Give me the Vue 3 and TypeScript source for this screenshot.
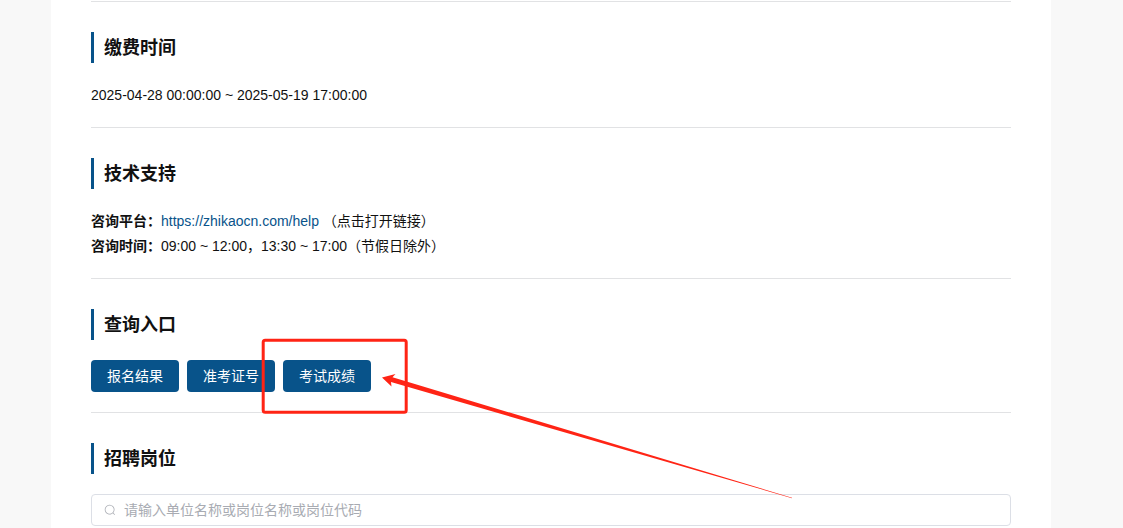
<script setup lang="ts">
import { ref } from 'vue'

const keyword = ref('')
const entries: string[] = ['报名结果', '准考证号']
</script>

<template>
  <div class="page">
    <main class="card">
      <section class="section">
        <h2 class="title">缴费时间</h2>
        <div class="lines">
          <p>2025-04-28 00:00:00 ~ 2025-05-19 17:00:00</p>
        </div>
      </section>

      <section class="section">
        <h2 class="title">技术支持</h2>
        <div class="lines">
          <p>
            <strong>咨询平台：</strong><a href="https://zhikaocn.com/help">https://zhikaocn.com/help</a>
            （点击打开链接）
          </p>
          <p><strong>咨询时间：</strong>09:00 ~ 12:00，13:30 ~ 17:00（节假日除外）</p>
        </div>
      </section>

      <section class="section">
        <h2 class="title">查询入口</h2>
        <div class="actions">
          <button v-for="entry in entries" :key="entry" type="button" class="btn">{{ entry }}</button>
          <div class="marked">
            <button type="button" class="btn">考试成绩</button>
            <svg class="marker" width="540" height="170" viewBox="0 0 540 170" aria-hidden="true">
              <rect x="2.2" y="2.2" width="143" height="72" rx="2" fill="none" stroke="#ff2415" stroke-width="3" />
              <path d="M121 39.5 L134.5 36 L131.5 39.2 L531 159.8 L531 160.2 L130 44 L130.5 48.5 Z" fill="#ff2415" />
            </svg>
          </div>
        </div>
      </section>

      <section class="section">
        <h2 class="title">招聘岗位</h2>
        <label class="search">
          <svg class="icon" width="12" height="12" viewBox="0 0 1024 1024" aria-hidden="true">
            <path
              fill="currentColor"
              d="m795.904 750.72 124.992 124.928a32 32 0 0 1-45.248 45.248L750.656 795.904a416 416 0 1 1 45.248-45.248zM480 832a352 352 0 1 0 0-704 352 352 0 0 0 0 704z"
            />
          </svg>
          <input v-model="keyword" type="text" aria-label="搜索岗位" placeholder="请输入单位名称或岗位名称或岗位代码" />
        </label>
      </section>
    </main>
  </div>
</template>

<style>
body {
  background: #f8f8f8;
  overflow: hidden;
}
</style>

<style scoped>
.page {
  box-sizing: border-box;
  min-height: 100vh;
  padding-right: 21px;
  display: flex;
  justify-content: center;
  background: #f8f8f8;
  color: #111;
  font: 14px/24px 'Liberation Sans', 'Noto Sans CJK SC', sans-serif;
}

.card {
  box-sizing: border-box;
  width: 100%;
  max-width: 1000px;
  padding: 1px 40px 2px;
  background: #fff;
}

.section {
  padding: 30px 0 20px;
  border-top: 1px solid #e1e2e4;
}

.section:last-child {
  padding-bottom: 0;
}

.title {
  margin: 0 0 20px;
  padding: 1px 0 0 10px;
  border-left: 3px solid #08538a;
  font-size: 18px;
  line-height: 30px;
  font-weight: 700;
}

.lines {
  display: grid;
  gap: 1px;
}

.lines p {
  margin: 0;
}

.lines a {
  color: #08538a;
  text-decoration: none;
}

.actions {
  display: flex;
  gap: 8px;
}

.btn {
  display: block;
  height: 32px;
  padding: 0 16px;
  border: 0;
  border-radius: 4px;
  background: #08538a;
  color: #fff;
  font: inherit;
  cursor: pointer;
}

.marked {
  position: relative;
}

.marker {
  position: absolute;
  left: -22px;
  top: -22px;
  pointer-events: none;
}

.search {
  box-sizing: border-box;
  display: flex;
  align-items: center;
  gap: 8px;
  height: 32px;
  padding: 0 12px;
  border: 1px solid #dcdfe6;
  border-radius: 4px;
  background: #fff;
}

.icon {
  flex: none;
  color: #a8abb2;
}

.search input {
  flex: 1;
  min-width: 0;
  padding: 0;
  border: 0;
  outline: 0;
  background: transparent;
  color: #606266;
  font: inherit;
}

.search input::placeholder {
  color: #a8abb2;
}
</style>
